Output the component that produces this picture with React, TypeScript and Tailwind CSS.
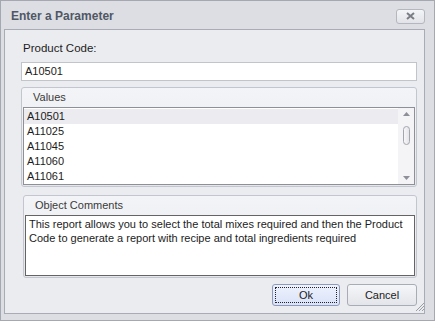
import React from "react";

const values = ["A10501", "A11025", "A11045", "A11060", "A11061"];

const GroupBox = ({
  title,
  className,
  children,
}: {
  title: string;
  className?: string;
  children: React.ReactNode;
}) => (
  <div
    className={`flex shrink-0 flex-col rounded-[3px] border border-[#c3c6ce] bg-gradient-to-b from-[#f3f4f7] to-[#e6e7ec] px-[1px] pb-[1px] ${className ?? ""}`}
  >
    <div className="flex h-[19px] items-center px-[10px] text-[11px] text-[#3a3a3a]">
      {title}
    </div>
    {children}
  </div>
);

const App = () => {
  return (
    <div
      className="flex h-[321px] w-[435px] flex-col border border-[#a5a8b0] bg-[#dcdee4]"
      style={{ fontFamily: '"Liberation Sans", Arial, sans-serif' }}
    >
      {/* title bar */}
      <div className="flex h-[28px] shrink-0 items-center justify-between pl-[10px] pr-[9px] pt-[2px]">
        <span className="text-[12px] font-bold text-[#505764]">Enter a Parameter</span>
        <div className="flex h-[15px] w-[29px] items-center justify-center rounded-[3px] border border-[#b4b7be] bg-gradient-to-b from-[#f4f5f7] to-[#e1e3e8]">
          <svg width="9" height="8" viewBox="0 0 9 8">
            <path d="M1 1 L8 7 M8 1 L1 7" stroke="#7a7d84" strokeWidth="2" />
          </svg>
        </div>
      </div>

      {/* client area */}
      <div className="relative mb-[6px] ml-[3px] mr-[9px] flex flex-1 flex-col border border-[#a9acb5] bg-[#ebecf0] pl-[16px] pr-[7px] pt-[11px] text-[11px] text-[#1c1c1c]">
        <div className="h-[15px] shrink-0 pl-[2px] text-[11.5px] leading-[15px]">Product Code:</div>
        <div className="mt-[6px] flex h-[19px] shrink-0 items-center border border-[#c2c4cb] bg-white px-[3px] text-[11px]">
          A10501
        </div>

        <GroupBox title="Values" className="mt-[6px] h-[100px]">
          <div className="flex flex-1 border border-[#8e9097] bg-white">
            <div className="flex flex-1 flex-col pt-[1px]">
              {values.map((v, i) => (
                <div
                  key={v}
                  className={`flex h-[15px] items-center pl-[3px] ${i === 0 ? "bg-[#ebebf0]" : ""}`}
                >
                  {v}
                </div>
              ))}
            </div>
            <div className="flex w-[16px] flex-col items-center bg-[#f4f4f7] py-[3px]">
              <svg width="7" height="4" viewBox="0 0 7 4" className="mt-[1px]">
                <path d="M0 4 L3.5 0 L7 4 Z" fill="#8d9097" />
              </svg>
              <div className="mt-[10px] h-[19px] w-[7px] rounded-[4px] border border-[#a3a6ad] bg-gradient-to-r from-[#f7f7f9] to-[#e4e5ea]" />
              <div className="flex-1" />
              <svg width="7" height="4" viewBox="0 0 7 4" className="mb-[1px]">
                <path d="M0 0 L7 0 L3.5 4 Z" fill="#8d9097" />
              </svg>
            </div>
          </div>
        </GroupBox>

        <GroupBox title="Object Comments" className="ml-[2px] mt-[8px] h-[83px]">
          <div className="flex-1 border border-[#646464] bg-white px-[3px] pt-[1px] text-[11px] leading-[14px]">
            This report allows you to select the total mixes required and then the Product Code to
            generate a report with recipe and total ingredients required
          </div>
        </GroupBox>

        <div className="mt-[6px] flex shrink-0 justify-end gap-[7px]">
          <div className="flex h-[22px] w-[68px] items-center justify-center rounded-[3px] border border-[#8e9aba] bg-gradient-to-b from-[#eef2fd] to-[#d9e2f8] p-[2px]">
            <div className="flex h-full w-full items-center justify-center border border-dotted border-[#222]">
              Ok
            </div>
          </div>
          <div className="flex h-[22px] w-[70px] items-center justify-center rounded-[3px] border border-[#a9acb4] bg-gradient-to-b from-[#f5f6f8] to-[#e3e5ea]">
            Cancel
          </div>
        </div>

        {/* size grip */}
        <svg
          width="11"
          height="11"
          viewBox="0 0 11 11"
          className="absolute bottom-[1px] right-[-1px]"
        >
          <path d="M10 2 L2 10 M10 5 L5 10 M10 8 L8 10" stroke="#9a9da4" strokeWidth="1" />
        </svg>
      </div>
    </div>
  );
};

export default App;
